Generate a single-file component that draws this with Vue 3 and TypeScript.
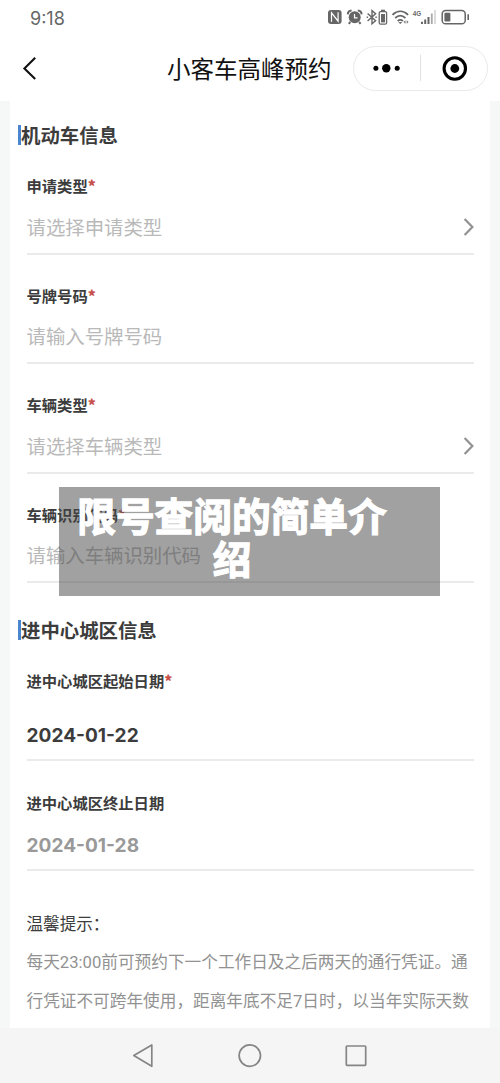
<script setup lang="ts">
interface Field {
  label: string
  text: string
  required: boolean
  kind: 'select' | 'input' | 'date' | 'date-muted'
}

const vehicleFields: Field[] = [
  { label: '申请类型', text: '请选择申请类型', required: true, kind: 'select' },
  { label: '号牌号码', text: '请输入号牌号码', required: true, kind: 'input' },
  { label: '车辆类型', text: '请选择车辆类型', required: true, kind: 'select' },
  { label: '车辆识别代码', text: '请输入车辆识别代码', required: true, kind: 'input' },
]

const cityFields: Field[] = [
  { label: '进中心城区起始日期', text: '2024-01-22', required: true, kind: 'date' },
  { label: '进中心城区终止日期', text: '2024-01-28', required: false, kind: 'date-muted' },
]

const sections = [
  { title: '机动车信息', fields: vehicleFields, key: 'vehicle' },
  { title: '进中心城区信息', fields: cityFields, key: 'city' },
]

const tipLines = [
  '每天23:00前可预约下一个工作日及之后两天的通行凭证。通',
  '行凭证不可跨年使用，距离年底不足7日时，以当年实际天数',
]
</script>

<template>
  <div class="screen">
    <header class="top">
      <div class="status">
        <span class="time">9:18</span>
        <svg class="status-icons" width="160" height="26" viewBox="0 0 160 26" fill="none" stroke="#666">
          <!-- NFC -->
          <rect x="8" y="10" width="13.6" height="14" rx="3" fill="#666" stroke="none" />
          <path d="M11.5 21.8V12.8l6.6 8.4V12.2" stroke="#fff" stroke-width="1.2" />
          <!-- alarm -->
          <circle cx="34.7" cy="17.3" r="6" fill="#666" stroke="none" />
          <path d="M27.8 14.4a4 4 0 0 1 3.8-3.8M41.6 14.4a4 4 0 0 0-3.8-3.8M30.3 22l-1.5 1.8M39.1 22l1.5 1.8" stroke-width="2" />
          <path d="M34.5 14v3.8h3" stroke="#fff" stroke-width="1.2" />
          <!-- bluetooth -->
          <path d="M47.6 13.5l8 7.2-3.6 3.1V10.6l3.6 3.1-8 7.2" stroke-width="1.4" />
          <path d="M46.7 17.2h1.4M55.4 17.2h1.4" stroke-width="1.4" />
          <rect x="59.2" y="11.6" width="7.4" height="12.6" rx="1.5" stroke-width="1.3" />
          <path d="M61 10.5h4" stroke-width="1.6" />
          <rect x="61" y="14" width="4" height="8.4" fill="#666" stroke="none" />
          <!-- wifi -->
          <path d="M72.5 14.8c4.8-4.6 10.8-4.6 15.6 0M75.2 18c3.2-3 7-3 10.2 0M77.7 21c1.7-1.5 3.5-1.5 5.2 0" stroke-width="1.8" />
          <path d="M78.3 22h4l-2 2.2zM83.5 22l2-1.7v3.4zM88.6 22l-1.9-1.7v3.4z" fill="#777" stroke="none" />
          <!-- signal -->
          <path d="M102 21.8v2.2M105.2 19.5v4.5M108.5 17v7" stroke-width="2" />
          <path d="M111.8 13.5V24" stroke="#aaa" stroke-width="1.8" />
          <path d="M115 10v14" stroke="#d2d2d2" stroke-width="1.6" />
          <text x="92.8" y="16.2" class="net" textLength="8.4" lengthAdjust="spacingAndGlyphs">4G</text>
          <!-- battery -->
          <rect x="122.2" y="10.6" width="23" height="13.2" rx="3.4" stroke-width="1.5" />
          <rect x="124.4" y="12.8" width="6" height="8.8" rx="1" fill="#666" stroke="none" />
          <path d="M148.2 14.3v5.8" stroke-width="1.6" />
        </svg>
      </div>
      <div class="navbar">
        <svg class="back" width="16" height="26" viewBox="0 0 16 26" fill="none" stroke="#111" stroke-width="2.1">
          <path d="M14.2 1.8L3.4 12.4l10.8 10.6" />
        </svg>
        <h1 class="title">小客车高峰预约</h1>
        <div class="capsule">
          <svg width="133" height="43" viewBox="0 0 133 43">
            <circle cx="21.9" cy="21.2" r="2.5" />
            <circle cx="32.3" cy="21.2" r="4.2" />
            <circle cx="43.2" cy="21.2" r="2.5" />
            <path d="M66.5 7.5v26.5" stroke="#e2e2e2" />
            <circle cx="100.8" cy="21.5" r="10.7" fill="none" stroke="#000" stroke-width="3.1" />
            <circle cx="100.8" cy="21.5" r="4.4" />
          </svg>
        </div>
      </div>
    </header>

    <main class="page">
      <div class="card">
        <section v-for="section in sections" :key="section.key" :class="['section', section.key]">
          <h2 class="heading"><i class="bar"></i>{{ section.title }}</h2>
          <div v-for="field in section.fields" :key="field.label" :class="['field', field.kind]">
            <div class="label">{{ field.label }}<b v-if="field.required" class="star">*</b></div>
            <div class="value">
              <span>{{ field.text }}</span>
              <svg v-if="field.kind === 'select'" class="arrow" width="12" height="20" viewBox="0 0 12 20" fill="none" stroke="#929292" stroke-width="2.2">
                <path d="M2.6 2l7.8 8-7.8 8" />
              </svg>
            </div>
          </div>
        </section>
        <section class="tips">
          <h3 class="tips-title">温馨提示：</h3>
          <p v-for="line in tipLines" :key="line" class="tip">{{ line }}</p>
        </section>
      </div>
    </main>

    <footer class="system">
      <svg width="500" height="55" viewBox="0 0 500 55" fill="none" stroke="#858585" stroke-width="1.7" stroke-linejoin="round">
        <path d="M133.8 27.6L151.8 17v21.3z" />
        <circle cx="249.8" cy="27.6" r="10.7" />
        <rect x="346.3" y="18" width="19.4" height="19.4" rx="0.8" />
      </svg>
    </footer>

    <div class="banner"><span>限号查阅的简单介</span><span>绍</span></div>
  </div>
</template>

<style>
body {
  margin: 0;
  background: #fff;
}
</style>

<style scoped>
.screen {
  position: relative;
  width: 500px;
  height: 1083px;
  overflow: hidden;
  display: flex;
  flex-direction: column;
  background: #fff;
  font-family: "Noto Sans CJK SC", sans-serif;
  color: #3c3c3c;
}
h1, h2, h3, p {
  margin: 0;
}
.top {
  height: 101px;
  flex: none;
}
.status {
  height: 36px;
  display: flex;
  justify-content: space-between;
  padding: 0 20px 0 30px;
}
.time {
  font-size: 18px;
  line-height: 38px;
  color: #666;
  font-family: Inter, sans-serif;
}
.net {
  font: bold 8px "Liberation Sans", sans-serif;
  fill: #666;
  stroke: none;
}
.navbar {
  height: 65px;
  display: flex;
  align-items: center;
  padding: 0 12px 0 21px;
}
.back {
  flex: none;
}
.title {
  flex: 1;
  margin: -1px 0 0 130px;
  font-size: 23.5px;
  line-height: 36px;
  font-weight: 400;
  color: #111;
  white-space: nowrap;
}
.capsule {
  box-sizing: border-box;
  width: 135px;
  height: 45px;
  margin-top: -1px;
  border: 1px solid #e9e9e9;
  border-radius: 23px;
}
.capsule svg {
  display: block;
}
.page {
  flex: none;
  height: 927px;
  padding: 0 10px;
  background: #f6f8f8;
}
.card {
  box-sizing: border-box;
  height: 927px;
  overflow: hidden;
  padding: 24px 16px 0 16.5px;
  background: #fff;
}
.heading {
  display: flex;
  align-items: center;
  height: 20px;
  margin-left: -8.5px;
  font-size: 19.4px;
  line-height: 20px;
  font-weight: 700;
}
.bar {
  width: 3px;
  height: 20px;
  background: #4a86cf;
}
.city .heading {
  margin-top: 36.5px;
}
.field {
  padding-top: 28.3px;
}
.label {
  height: 26.3px;
  font-size: 15.3px;
  line-height: 24px;
  font-weight: 700;
}
.star {
  color: #c8504a;
}
.value {
  box-sizing: border-box;
  height: 55px;
  padding-top: 2px;
  border-bottom: 2px solid #eaeaea;
  display: flex;
  align-items: center;
  justify-content: space-between;
  font-size: 19.4px;
  line-height: 28px;
  color: #b9b9b9;
}
.value span {
  margin-top: -1px;
}
.date .value,
.date-muted .value {
  font-family: Inter, sans-serif;
  font-weight: 700;
  font-size: 19.1px;
  color: #3c3c3c;
}
.date .value {
  height: 67px;
  padding-top: 17px;
}
.date-muted .value {
  padding-top: 5px;
  color: #999;
}
.tips {
  margin-top: 33px;
}
.tips-title {
  height: 40px;
  font-size: 16.6px;
  line-height: 38.7px;
  font-weight: 400;
}
.tip {
  font-family: Roboto, "Noto Sans CJK SC", sans-serif;
  font-size: 16.67px;
  line-height: 38.7px;
  color: #929292;
  white-space: nowrap;
}
.system {
  flex: none;
  height: 55px;
  background: #f5f5f5;
}
.banner {
  position: absolute;
  left: 59px;
  top: 487px;
  box-sizing: border-box;
  width: 381px;
  height: 109px;
  padding: 6px 35px 0 0;
  display: flex;
  flex-direction: column;
  align-items: center;
  background: rgba(68, 68, 68, 0.5);
  color: #fff;
  font-size: 38.7px;
  line-height: 43px;
  font-weight: 700;
  -webkit-text-stroke: 1.3px #fff;
  white-space: nowrap;
}
</style>
